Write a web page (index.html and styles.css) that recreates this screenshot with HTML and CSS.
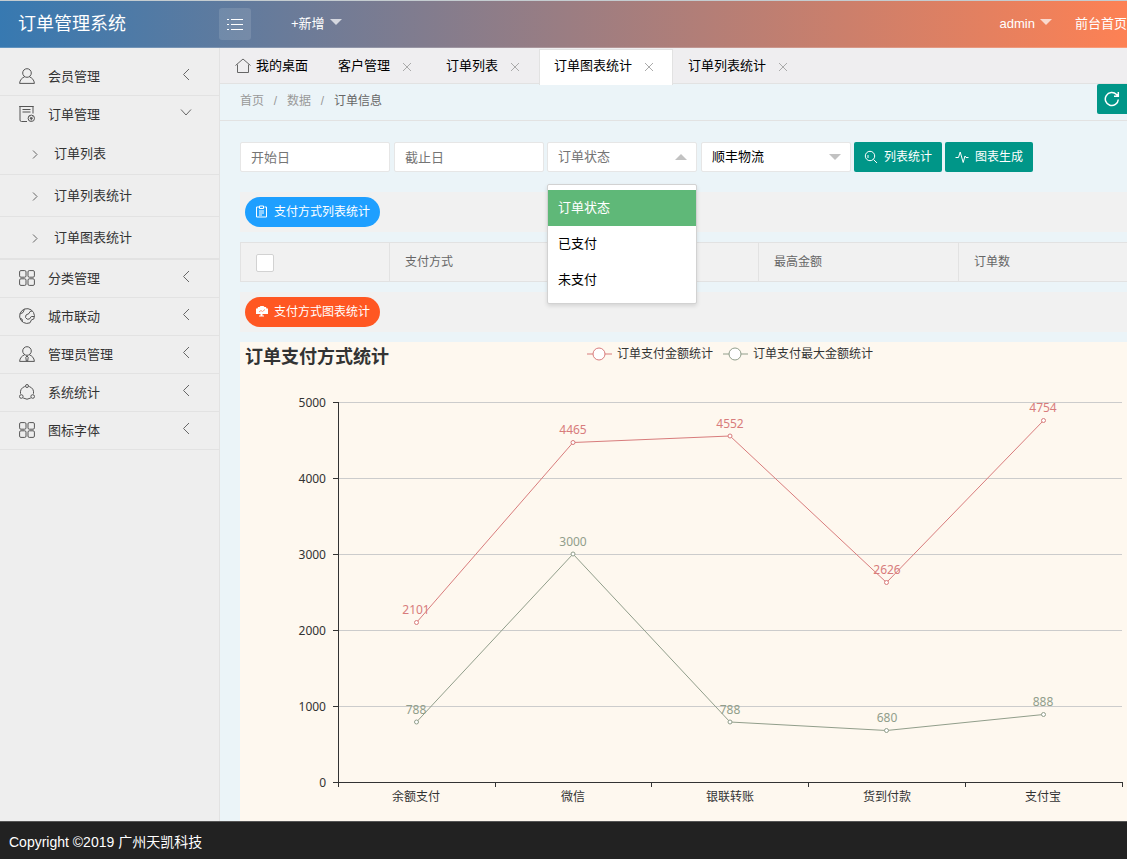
FILE: index.html
```html
<!DOCTYPE html>
<html lang="zh-CN">
<head>
<meta charset="utf-8">
<title>订单管理系统</title>
<link rel="stylesheet" href="styles.css">
</head>
<body>
<svg class="sprite" aria-hidden="true">
  <symbol id="left" viewBox="0 0 16 16"><path d="M11 3 5.500 8.500 11 14"/></symbol>
  <symbol id="down" viewBox="0 0 16 16"><path d="M3 5.500 8 11l5-5.500"/></symbol>
  <symbol id="right" viewBox="0 0 16 16"><path d="M6 4.500 10 8.500 6 12.500"/></symbol>
  <symbol id="close" viewBox="0 0 18 18"><path d="m5 5 8 8m0-8-8 8"/></symbol>
  <symbol id="user" viewBox="0 0 16 16"><circle cx="8" cy="5" r="4.300"/><path d="M5.600 8.800C3 9.800.8 12 .6 15.400h14.800C15.200 12 13 9.800 10.400 8.800"/></symbol>
  <symbol id="admin" viewBox="0 0 16 16"><circle cx="8" cy="5" r="4.300"/><path d="M5.600 8.800C3 9.800.8 12 .6 15.400h14.800C15.200 12 13 9.800 10.400 8.800M8 10l-1.200 1.200L7.300 15h1.400l.5-3.800z"/></symbol>
  <symbol id="order" viewBox="0 0 16 16"><path d="M8 15.500H2.500Q1 15.500 1 14V.5h13v7M.2.500h14.500M3.500 3.500h8M3.500 6h8"/><circle cx="12.300" cy="12.300" r="3.200"/><path d="m10.800 10.500 1.500 1.500 1.500-1.500M12.300 12v2.500M10.800 12.600h3"/></symbol>
  <symbol id="grid" viewBox="0 0 16 16"><rect x=".6" y=".6" width="6.400" height="6.600" rx="1.300"/><rect x="9" y=".6" width="6.400" height="6.600" rx="1.300"/><rect x=".6" y="8.800" width="6.400" height="6.600" rx="1.300"/><rect x="9" y="8.800" width="6.400" height="6.600" rx="1.300"/></symbol>
  <symbol id="globe" viewBox="0 0 16 16"><path d="M14.800 11A7.400 7.400 0 1 0 11 14.800M15.300 8.500h-3L10.500 11l-2.300.2L6.500 9.500 7 7l3-1.500 1-2L13 3M1 6l3-1.500L5.500 1.200M1 10.500l2 .5.500 3M11 14.800l1.500-3 2.300-.8"/></symbol>
  <symbol id="ring" viewBox="0 0 16 16"><path d="M5.800 2.500A6.700 6.700 0 0 0 1.500 9.700M10.200 2.500a6.700 6.700 0 0 1 4.300 7.200M4.200 14a7 7 0 0 0 7.600 0"/><circle cx="8" cy="2" r="1.500"/><circle cx="2.300" cy="12.500" r="1.800"/><circle cx="13.700" cy="12.500" r="1.800"/></symbol>
</svg>

<header class="top">
  <h1 class="logo">订单管理系统</h1>
  <button class="toggle" aria-label="切换菜单"><svg width="18" height="12" viewBox="0 0 18 12"><path d="M1 1.500h2m2 0h12M1 6.500h2m2 0h12M1 11.500h2m2 0h12"/></svg></button>
  <a class="top-link" href="#">+新增<span class="caret"></span></a>
  <nav class="top-right">
    <a class="top-link" href="#">admin<span class="caret"></span></a>
    <a class="top-link" href="#">前台首页</a>
  </nav>
</header>

<div class="body">
  <nav class="side">
    <ul class="menu">
      <li><a href="#"><svg class="ico"><use href="#user"/></svg>会员管理<svg class="arrow"><use href="#left"/></svg></a></li>
      <li><a href="#"><svg class="ico"><use href="#order"/></svg>订单管理<svg class="arrow"><use href="#down"/></svg></a>
        <ul class="sub">
          <li><a href="#"><svg class="mark"><use href="#right"/></svg>订单列表</a></li>
          <li><a href="#"><svg class="mark"><use href="#right"/></svg>订单列表统计</a></li>
          <li><a href="#"><svg class="mark"><use href="#right"/></svg>订单图表统计</a></li>
        </ul>
      </li>
      <li><a href="#"><svg class="ico"><use href="#grid"/></svg>分类管理<svg class="arrow"><use href="#left"/></svg></a></li>
      <li><a href="#"><svg class="ico"><use href="#globe"/></svg>城市联动<svg class="arrow"><use href="#left"/></svg></a></li>
      <li><a href="#"><svg class="ico"><use href="#admin"/></svg>管理员管理<svg class="arrow"><use href="#left"/></svg></a></li>
      <li><a href="#"><svg class="ico"><use href="#ring"/></svg>系统统计<svg class="arrow"><use href="#left"/></svg></a></li>
      <li><a href="#"><svg class="ico"><use href="#grid"/></svg>图标字体<svg class="arrow"><use href="#left"/></svg></a></li>
    </ul>
  </nav>

  <main class="main">
    <ul class="tabs">
      <li class="tab"><svg class="home" width="16" height="16" viewBox="0 0 16 16"><path d="M.5 7.500 8 1l7.500 6.500M2.500 6.500v8h11v-8"/></svg>我的桌面</li>
      <li class="tab">客户管理<button class="close" aria-label="关闭"><svg><use href="#close"/></svg></button></li>
      <li class="tab">订单列表<button class="close" aria-label="关闭"><svg><use href="#close"/></svg></button></li>
      <li class="tab active">订单图表统计<button class="close" aria-label="关闭"><svg><use href="#close"/></svg></button></li>
      <li class="tab">订单列表统计<button class="close" aria-label="关闭"><svg><use href="#close"/></svg></button></li>
    </ul>

    <div class="crumbs">
      <nav class="path"><a href="#">首页</a><span>/</span><a href="#">数据</a><span>/</span><a class="here" href="#">订单信息</a></nav>
      <button class="refresh" aria-label="刷新"><svg width="16" height="16" viewBox="0 0 16 16"><path d="M14.300 8.500A6.500 6.500 0 1 1 12.500 3.500L14 5M14.300 1v4.300H10"/></svg></button>
    </div>

    <div class="content">
      <form class="filters">
        <div class="dates">
          <input class="field" type="text" placeholder="开始日" aria-label="开始日">
          <input class="field" type="text" placeholder="截止日" aria-label="截止日">
        </div>
        <div class="selects">
          <div class="pick open">
            <select class="field hint" aria-label="订单状态"><option>订单状态</option><option>已支付</option><option>未支付</option></select>
            <ul class="options"><li class="chosen">订单状态</li><li>已支付</li><li>未支付</li></ul>
          </div>
          <div class="pick">
            <select class="field" aria-label="物流"><option>顺丰物流</option></select>
          </div>
        </div>
        <div class="actions">
          <button class="btn" type="button"><svg width="14" height="14" viewBox="0 0 14 14"><circle cx="6" cy="6" r="4.700"/><path d="m9.500 9.500 3.500 3.500M4 8V5"/></svg>列表统计</button>
          <button class="btn" type="button"><svg width="14" height="14" viewBox="0 0 14 14"><path d="M.5 7.500h3L5.200 2l3 10.500L10 6l1 1.500h2.500"/></svg>图表生成</button>
        </div>
      </form>

      <div class="band"><button class="btn pill blue"><svg width="14" height="14" viewBox="0 0 14 14"><path d="M4.500 2h-3v10h10V2h-2M4.500 1h4v2.500h-4zM4 6h5M4 8h5M4 10h3"/></svg>支付方式列表统计</button></div>

      <table class="stats">
        <colgroup><col class="c-check"><col class="c-way"><col class="c-num"><col class="c-num"><col></colgroup>
        <thead><tr>
          <th><input class="check" type="checkbox" aria-label="全选"></th>
          <th>支付方式</th><th></th><th>最高金额</th><th>订单数</th>
        </tr></thead>
      </table>

      <div class="band"><button class="btn pill orange"><svg width="14" height="14" viewBox="0 0 14 14"><path class="solid" d="M3 2h1.500l1-1h3l1 1H11l.5 1.500H13V9H7.500v1.500H9v1H4v-1h1.500V9H1V3.500h1.500z"/><path class="trend" d="m4 7 2-1.500L7.500 6.500 10 4.500"/></svg>支付方式图表统计</button></div>

      <figure class="chart">
        <figcaption class="chart-head">
          <h2>订单支付方式统计</h2>
          <ul class="legend">
            <li class="paid"><svg width="25" height="14"><path d="M0 7h25"/><circle cx="12" cy="7" r="6"/></svg>订单支付金额统计</li>
            <li class="peak"><svg width="25" height="14"><path d="M0 7h25"/><circle cx="12" cy="7" r="6"/></svg>订单支付最大金额统计</li>
          </ul>
        </figcaption>
        <svg class="plot" viewBox="0 0 887 449" role="img" aria-label="订单支付方式统计">
          <path class="rule" d="M98 30.500h784M98 106.500h784M98 182.500h784M98 258.500h784M98 334.500h784"/>
          <path class="axis" d="M98.500 30v385M93 410.500h790M93 30.500h5M93 106.500h5M93 182.500h5M93 258.500h5M93 334.500h5M255.500 410v5M411.500 410v5M568.500 410v5M725.500 410v5M882.500 410v5"/>
          <g class="ylab">
            <text x="86" y="35">5000</text><text x="86" y="111">4000</text><text x="86" y="187">3000</text><text x="86" y="263">2000</text><text x="86" y="339">1000</text><text x="86" y="415">0</text>
          </g>
          <g class="xlab">
            <text x="176" y="429">余额支付</text><text x="333" y="429">微信</text><text x="490" y="429">银联转账</text><text x="647" y="429">货到付款</text><text x="803" y="429">支付宝</text>
          </g>
          <g class="paid">
            <polyline points="176.500,250.500 333,70.500 490,64 646.500,210.500 803.500,48.500"/>
            <circle cx="176.500" cy="250.500" r="2"/><circle cx="333" cy="70.500" r="2"/><circle cx="490" cy="64" r="2"/><circle cx="646.500" cy="210.500" r="2"/><circle cx="803.500" cy="48.500" r="2"/>
            <text x="176" y="242">2101</text><text x="333" y="62">4465</text><text x="490" y="56">4552</text><text x="647" y="202">2626</text><text x="803" y="40">4754</text>
          </g>
          <g class="peak">
            <polyline points="176.500,350 333,182 490,350 646.500,358.500 803.500,342.500"/>
            <circle cx="176.500" cy="350" r="2"/><circle cx="333" cy="182" r="2"/><circle cx="490" cy="350" r="2"/><circle cx="646.500" cy="358.500" r="2"/><circle cx="803.500" cy="342.500" r="2"/>
            <text x="176" y="342">788</text><text x="333" y="174">3000</text><text x="490" y="342">788</text><text x="647" y="350">680</text><text x="803" y="334">888</text>
          </g>
        </svg>
      </figure>
    </div>
  </main>
</div>

<footer class="foot">Copyright ©2019 广州天凯科技</footer>
</body>
</html>
```
FILE: styles.css
```css
* { box-sizing: border-box; }
body {
  margin: 0;
  min-height: 100vh;
  display: flex;
  flex-direction: column;
  overflow-x: hidden;
  font: 13px/20px "Liberation Sans", "Noto Sans CJK SC", sans-serif;
  color: #333;
}
ul { list-style: none; margin: 0; padding: 0; }
a { color: inherit; text-decoration: none; }
button, input, select { font: inherit; margin: 0; }
button { padding: 0; border: 0; background: none; cursor: pointer; }
svg { fill: none; stroke: currentColor; flex: none; }
.sprite { position: absolute; width: 0; height: 0; }

.top {
  display: flex;
  align-items: center;
  height: 48px;
  border-top: 1px solid #c4ccd0;
  border-bottom: 1px solid rgba(255, 255, 255, .2);
  background: linear-gradient(to right, #3779b1, #fd8154) border-box;
  color: #fff;
}
.logo { width: 219px; margin: 0; padding-left: 18px; font-size: 18px; font-weight: 400; }
.toggle {
  display: grid;
  place-items: center;
  width: 32px;
  height: 32px;
  margin-right: 40px;
  border-radius: 3px;
  background: rgba(255, 255, 255, .12);
  color: #fff;
}
.top-link { display: flex; align-items: center; gap: 5px; white-space: nowrap; }
.caret { border: 6px solid transparent; border-top-color: rgba(255, 255, 255, .7); border-bottom: 0; margin-bottom: 4px; }
.top-right { display: flex; gap: 23px; margin-left: auto; }

.body { flex: 1; display: flex; }
.side { flex: none; width: 220px; padding-top: 10px; background: #eee; border-right: 1px solid #e2e2e2; }
.menu > li { border-bottom: 1px solid #e2e2e2; }
.menu a { display: flex; align-items: center; height: 37px; padding-left: 19px; }
.ico { width: 16px; height: 16px; margin: 0 13px 2px 0; color: #555; }
.arrow { width: 16px; height: 16px; margin: 0 25px 6px auto; color: #666; }
.sub li { border-bottom: 1px solid #e2e2e2; }
.menu .sub a { height: 41px; padding-left: 27px; }
.mark { width: 16px; height: 16px; margin-right: 11px; color: #666; }

.main { flex: 1; min-width: 0; background: #ebf4f8; }
.tabs { display: flex; height: 36px; padding-top: 1px; background: #efeef0; border-bottom: 1px solid #e2e2e2; color: #000; }
.tab { display: flex; align-items: center; height: 33px; padding: 0 15px; white-space: nowrap; }
.tab.active { height: 36px; padding: 0 14px 4px; background: #fff; border: 1px solid #e2e2e2; border-bottom: 0; }
.home { margin-right: 5px; color: #666; }
.close { width: 18px; height: 18px; margin: 2px 0 0 8px; color: #aaa; }
.close svg { display: block; width: 18px; height: 18px; }

.crumbs { display: flex; justify-content: space-between; height: 37px; padding-left: 20px; border-bottom: 1px solid #e2e2e2; font-size: 12px; }
.path { display: flex; align-items: center; height: 34px; color: #999; }
.path span { width: 23px; text-align: center; }
.path .here { color: #666; }
.refresh { display: grid; place-items: center; width: 30px; height: 30px; border-radius: 2px 0 0 2px; background: #009688; color: #fff; }
.refresh svg { stroke-width: 1.5; }

.content { display: grid; gap: 10px; padding: 21px 0 0 20px; }
.filters { display: flex; gap: 3px; margin-bottom: 10px; }
.dates, .selects { display: flex; gap: 4px; }
.actions { display: flex; gap: 3px; }
.actions .btn { gap: 6px; }
.field { width: 150px; height: 30px; padding: 0 10px; border: 1px solid #e6e6e6; border-radius: 2px; background: #fff; color: #000; appearance: none; }
.field::placeholder { color: #757575; }
.hint { color: #757575; }
.pick { position: relative; }
.pick::after { content: ""; position: absolute; right: 10px; top: 12px; border: 6px solid transparent; border-top-color: #c2c2c2; border-bottom: 0; pointer-events: none; }
.pick.open::after { border-top: 0; border-bottom: 6px solid #c2c2c2; }
.options { position: absolute; z-index: 2; left: 0; top: 42px; width: 100%; padding: 5px 0; border: 1px solid #d2d2d2; border-radius: 2px; background: #fff; box-shadow: 0 2px 4px rgba(0, 0, 0, .12); color: #000; }
.options li { padding: 0 10px; line-height: 36px; }
.options .chosen { background: #5fb878; color: #fff; }
.btn { display: inline-flex; align-items: center; gap: 5px; height: 30px; padding: 0 10px; border-radius: 2px; background: #009688; color: #fff; font-size: 12px; white-space: nowrap; }
.band { display: flex; padding: 5px; background: #f1f1f1; }
.pill { border-radius: 15px; }
.blue { background: #1e9fff; }
.orange { background: #ff5722; }
.solid { fill: #fff; stroke: none; }
.trend { stroke: #ff9a7a; }

.stats { width: 100%; height: 40px; table-layout: fixed; border-collapse: collapse; background: #f1f1f1; border: 1px solid #e2e2e2; border-right: 0; }
.stats th { padding: 0 15px; border-left: 1px solid #e2e2e2; text-align: left; font-size: 12px; font-weight: 400; color: #666; }
.c-check { width: 149px; }
.c-way { width: 169px; }
.c-num { width: 200px; }
.check { display: block; width: 18px; height: 18px; margin-top: 2px; appearance: none; border: 1px solid #d2d2d2; border-radius: 2px; background: #fff; }

.chart { margin: 0; background: #fef8ef; font-size: 12px; }
.chart-head { display: flex; align-items: center; height: 30px; padding-left: 5px; }
.chart-head h2 { margin: 0; font-size: 18px; }
.legend { display: flex; gap: 10px; margin: 0 0 6px 198px; }
.legend li { display: flex; align-items: center; gap: 5px; white-space: nowrap; }
.plot { display: block; width: 100%; height: auto; }
.plot text { stroke: none; fill: #333; font: 12px "Noto Sans", "Noto Sans CJK SC", sans-serif; text-anchor: middle; }
.plot .ylab text { text-anchor: end; }
.rule { stroke: #ccc; }
.axis { stroke: #333; }
.paid polyline, .paid circle, .paid path { stroke: #d87c7c; }
.peak polyline, .peak circle, .peak path { stroke: #919e8b; }
.paid circle, .peak circle { fill: #fff; }
.plot .paid text { fill: #d87c7c; }
.plot .peak text { fill: #919e8b; }

.foot { padding: 10px 9px 7px; border-top: 1px solid #555; background: #222; color: #fff; font-size: 14px; }
```
